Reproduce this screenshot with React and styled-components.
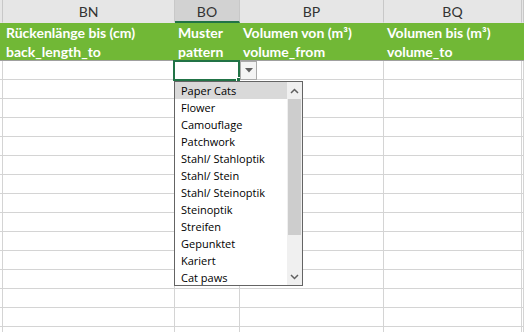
import React from 'react';
import styled, { createGlobalStyle } from 'styled-components';

const GlobalStyle = createGlobalStyle`
  html, body {
    margin: 0;
    padding: 0;
    background: #fff;
    overflow: hidden;
  }
`;

const columns = [
  { key: 'stub', width: 3 },
  { key: 'BN', width: 172, title: 'Rückenlänge bis (cm)', field: 'back_length_to' },
  { key: 'BO', width: 65, title: 'Muster', field: 'pattern', active: true },
  { key: 'BP', width: 144, title: 'Volumen von (m³)', field: 'volume_from' },
  { key: 'BQ', width: 138, title: 'Volumen bis (m³)', field: 'volume_to' },
  { key: 'rest', width: 2 },
];

const options = [
  'Paper Cats',
  'Flower',
  'Camouflage',
  'Patchwork',
  'Stahl/ Stahloptik',
  'Stahl/ Stein',
  'Stahl/ Steinoptik',
  'Steinoptik',
  'Streifen',
  'Gepunktet',
  'Kariert',
  'Cat paws',
];

const Sheet = styled.div`
  position: relative;
  width: 524px;
  height: 332px;
  overflow: hidden;
  background: #fff;
`;

const Row = styled.div`
  display: flex;
  height: ${(p) => p.h}px;
`;

const HeadCell = styled.div`
  box-sizing: border-box;
  flex: 0 0 ${(p) => p.w}px;
  height: 100%;
  background: ${(p) => (p.active ? '#d2d2d2' : '#e6e6e6')};
  border-right: 1px solid #c8c8c8;
  border-bottom: ${(p) => (p.active ? '2px solid #217346' : '1px solid #e6e6e6')};
  display: flex;
  align-items: center;
  justify-content: center;
  padding-top: 1px;
  font-family: 'Lato', 'Liberation Sans', sans-serif;
  font-size: 14px;
  color: #333;
`;

const TitleRow = styled(Row)`
  background: #71b836;
  border-bottom: 1px solid #a0a0a0;
  box-sizing: border-box;
`;

const TitleCell = styled.div`
  box-sizing: border-box;
  flex: 0 0 ${(p) => p.w}px;
  padding: 0 0 0 3px;
  font-family: 'Lato', 'Liberation Sans', sans-serif;
  font-weight: bold;
  font-size: 14px;
  line-height: 19px;
  color: #fff;
  white-space: nowrap;
  overflow: hidden;
`;

const Cell = styled.div`
  box-sizing: border-box;
  flex: 0 0 ${(p) => p.w}px;
  height: 100%;
  border-right: 1px solid #d4d4d4;
  border-bottom: 1px solid #d4d4d4;
`;

const Selection = styled.div`
  position: absolute;
  left: 173px;
  top: 60px;
  width: 67px;
  height: 21px;
  box-sizing: border-box;
  border: 2px solid #217346;
`;

const Handle = styled.div`
  position: absolute;
  right: -3px;
  bottom: -3px;
  width: 5px;
  height: 5px;
  background: #217346;
  border: 1px solid #fff;
  box-sizing: border-box;
`;

const DropButton = styled.div`
  position: absolute;
  left: 240px;
  top: 61px;
  width: 17px;
  height: 19px;
  box-sizing: border-box;
  border: 1px solid #ababab;
  background: #f4f4f4;
  display: flex;
  align-items: center;
  justify-content: center;
`;

const List = styled.div`
  position: absolute;
  left: 174px;
  top: 81px;
  width: 129px;
  height: 205px;
  box-sizing: border-box;
  border: 1px solid #646464;
  background: #fff;
  display: flex;
`;

const Items = styled.div`
  flex: 1;
  display: flex;
  flex-direction: column;
`;

const Item = styled.div`
  height: 17px;
  line-height: 17px;
  padding-left: 6px;
  font-family: 'Open Sans', 'Noto Sans', sans-serif;
  font-size: 11px;
  color: #000;
  white-space: nowrap;
  background: ${(p) => (p.selected ? '#d9d9d9' : 'transparent')};
`;

const ScrollBar = styled.div`
  flex: 0 0 15px;
  background: #f0f0f0;
  display: flex;
  flex-direction: column;
`;

const Arrow = styled.div`
  height: 17px;
  display: flex;
  align-items: center;
  justify-content: center;
`;

const Track = styled.div`
  flex: 1;
  padding: 0 1px;
`;

const Thumb = styled.div`
  height: 136px;
  background: #cdcdcd;
`;

const Chevron = ({ up }) => (
  <svg width="9" height="6" viewBox="0 0 9 6">
    <polyline
      points={up ? '1,5 4.5,1.5 8,5' : '1,1 4.5,4.5 8,1'}
      fill="none"
      stroke="#606060"
      strokeWidth="1.5"
    />
  </svg>
);

const dataRows = Array.from({ length: 15 });

export default function App() {
  return (
    <Sheet>
      <GlobalStyle />
      <Row h={23}>
        {columns.map((c) => (
          <HeadCell key={c.key} w={c.width} active={c.active}>
            {c.title ? c.key : ''}
          </HeadCell>
        ))}
      </Row>
      <TitleRow h={38}>
        {columns.map((c) => (
          <TitleCell key={c.key} w={c.width}>
            {c.title && (
              <>
                <div>{c.title}</div>
                <div>{c.field}</div>
              </>
            )}
          </TitleCell>
        ))}
      </TitleRow>
      {dataRows.map((_, i) => (
        <Row h={19} key={i}>
          {columns.map((c) => (
            <Cell key={c.key} w={c.width} />
          ))}
        </Row>
      ))}

      <Selection>
        <Handle />
      </Selection>
      <DropButton>
        <svg width="8" height="5" viewBox="0 0 8 5">
          <polygon points="0,0 8,0 4,4.5" fill="#5f5f5f" />
        </svg>
      </DropButton>
      <List>
        <Items>
          {options.map((o, i) => (
            <Item key={o} selected={i === 0}>
              {o}
            </Item>
          ))}
        </Items>
        <ScrollBar>
          <Arrow>
            <Chevron up />
          </Arrow>
          <Track>
            <Thumb />
          </Track>
          <Arrow>
            <Chevron />
          </Arrow>
        </ScrollBar>
      </List>
    </Sheet>
  );
}
